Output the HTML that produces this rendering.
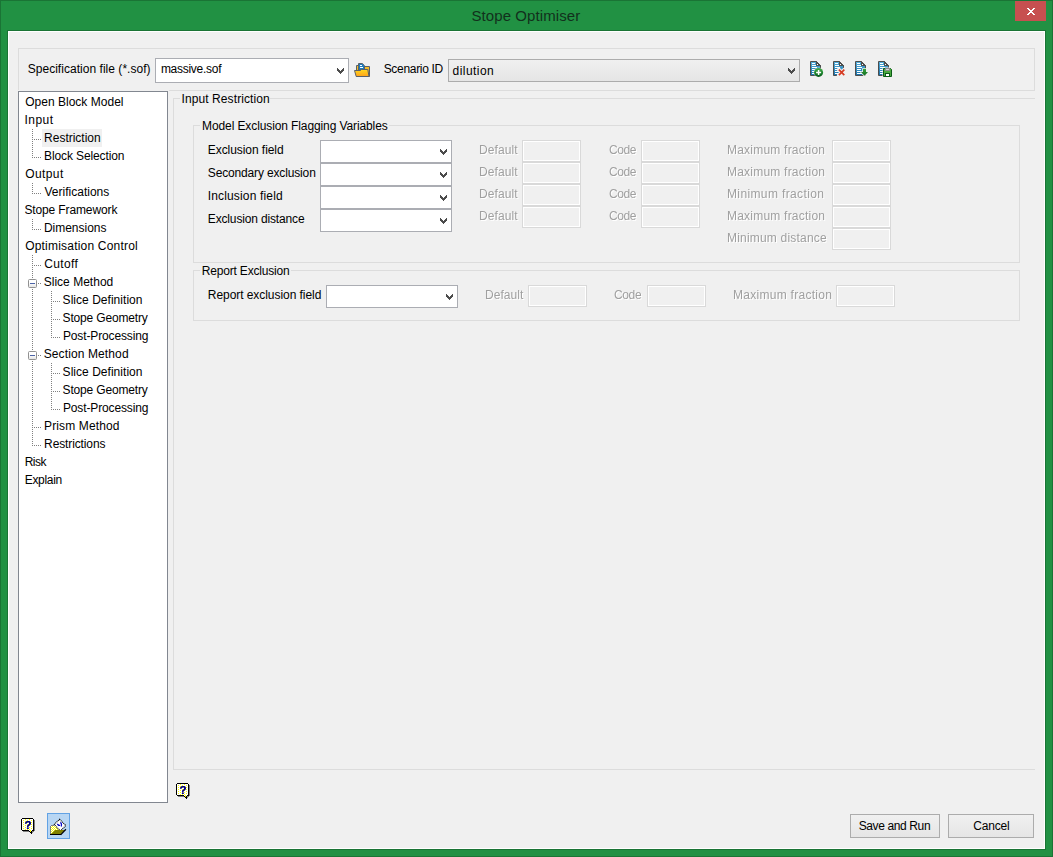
<!DOCTYPE html>
<html><head><meta charset="utf-8"><title>Stope Optimiser</title>
<style>
html,body{margin:0;padding:0}
body{width:1053px;height:857px;overflow:hidden;background:#219143;font-family:"Liberation Sans",sans-serif;font-size:12px;color:#000;position:relative}
.a{position:absolute;white-space:nowrap;line-height:14px}
.t{position:absolute;white-space:nowrap;line-height:14px;height:14px}
.dis{color:#a0a0a0;text-shadow:1px 1px 0 #fff;will-change:transform}
#frame{position:absolute;left:0;top:0;width:1051px;height:855px;border:1px solid #1a7435}
#client{position:absolute;left:7px;top:30px;width:1037px;height:818px;border:1px solid #1a7435;background:#fff}
#clientin{position:absolute;left:9px;top:32px;width:1035px;height:816px;background:#f0f0f0}
.grp{position:absolute;border:1px solid #dcdcdc;box-sizing:border-box}
.gl{position:absolute;background:#f0f0f0;padding:0;line-height:14px;height:14px;white-space:nowrap}
.combo{position:absolute;box-sizing:border-box;border:1px solid #abadb3;background:#fff}
.ddl{position:absolute;box-sizing:border-box;border:1px solid #acacac;background:linear-gradient(#f0f0f0,#e5e5e5)}
.btn{position:absolute;box-sizing:border-box;border:1px solid #acacac;background:linear-gradient(#f0f0f0,#e5e5e5);text-align:center}
.tf{position:absolute;box-sizing:border-box;border:1px solid #d9d9d9;box-shadow:inset 0 0 0 1px #fff;background:#f0f0f0}
.chev{position:absolute;width:7px;height:6px}
svg{position:absolute;overflow:visible}
</style></head>
<body>
<div id="frame"></div>
<div id="client"></div><div id="clientin"></div>
<div class="t " style="left:471.45px;top:7px;letter-spacing:0.087px;font-size:15px;line-height:18px;height:18px;color:#12301c;">Stope Optimiser</div>
<div class="a" style="left:1015px;top:1px;width:31px;height:20px;background:#c75050"></div>
<svg style="left:1027px;top:8px" width="8" height="7" viewBox="0 0 8 7" shape-rendering="crispEdges"><g fill="#fff"><rect x="0" y="0" width="2" height="1"/><rect x="6" y="0" width="2" height="1"/><rect x="1" y="1" width="2" height="1"/><rect x="5" y="1" width="2" height="1"/><rect x="2" y="2" width="4" height="1"/><rect x="3" y="3" width="2" height="1"/><rect x="2" y="4" width="4" height="1"/><rect x="1" y="5" width="2" height="1"/><rect x="5" y="5" width="2" height="1"/><rect x="0" y="6" width="2" height="1"/><rect x="6" y="6" width="2" height="1"/></g></svg>
<div class="grp" style="left:18px;top:48px;width:1017px;height:43px"></div>
<div class="t " style="left:27.70px;top:62px;letter-spacing:0.033px;">Specification file (*.sof)</div>
<div class="combo" style="left:155px;top:58px;width:194px;height:25px"></div>
<svg class="chev" style="left:337px;top:68px" width="7" height="6" viewBox="0 0 7 6" shape-rendering="crispEdges"><g fill="#4c4c4c"><rect x="0" y="0" width="1" height="1"/><rect x="6" y="0" width="1" height="1"/><rect x="0" y="1" width="2" height="1"/><rect x="5" y="1" width="2" height="1"/><rect x="0" y="2" width="3" height="1"/><rect x="4" y="2" width="3" height="1"/><rect x="1" y="3" width="5" height="1"/><rect x="2" y="4" width="3" height="1"/><rect x="3" y="5" width="1" height="1"/></g></svg>
<div class="t " style="left:160.90px;top:62px;letter-spacing:-0.273px;">massive.sof</div>
<div class="t " style="left:383.70px;top:62px;letter-spacing:-0.317px;">Scenario ID</div>
<div class="ddl" style="left:448px;top:59px;width:352px;height:23px"></div>
<svg class="chev" style="left:788px;top:68px" width="7" height="6" viewBox="0 0 7 6" shape-rendering="crispEdges"><g fill="#4c4c4c"><rect x="0" y="0" width="1" height="1"/><rect x="6" y="0" width="1" height="1"/><rect x="0" y="1" width="2" height="1"/><rect x="5" y="1" width="2" height="1"/><rect x="0" y="2" width="3" height="1"/><rect x="4" y="2" width="3" height="1"/><rect x="1" y="3" width="5" height="1"/><rect x="2" y="4" width="3" height="1"/><rect x="3" y="5" width="1" height="1"/></g></svg>
<div class="t " style="left:452.61px;top:64px;letter-spacing:0.437px;">dilution</div>
<div class="a" style="left:17px;top:90px;width:152px;height:714px;background:#f0f0f0"></div>
<div class="a" style="left:18px;top:91px;width:150px;height:712px;box-sizing:border-box;border:1px solid #828790;background:#fff"></div>
<div class="a" style="left:42px;top:129px;width:60px;height:18px;background:#f0f0f0"></div>
<div class="t " style="left:25.17px;top:95px;letter-spacing:0.020px;">Open Block Model</div>
<div class="t " style="left:24.60px;top:113px;letter-spacing:0.433px;">Input</div>
<div class="t " style="left:44.10px;top:131px;letter-spacing:-0.012px;">Restriction</div>
<div class="t " style="left:44.10px;top:149px;letter-spacing:-0.124px;">Block Selection</div>
<div class="t " style="left:25.17px;top:167px;letter-spacing:0.406px;">Output</div>
<div class="t " style="left:44.51px;top:185px;letter-spacing:0.006px;">Verifications</div>
<div class="t " style="left:24.40px;top:203px;letter-spacing:-0.121px;">Stope Framework</div>
<div class="t " style="left:43.90px;top:221px;letter-spacing:-0.014px;">Dimensions</div>
<div class="t " style="left:25.17px;top:239px;letter-spacing:0.206px;">Optimisation Control</div>
<div class="t " style="left:44.31px;top:257px;letter-spacing:0.358px;">Cutoff</div>
<div class="t " style="left:43.70px;top:275px;letter-spacing:0.018px;">Slice Method</div>
<div class="t " style="left:62.60px;top:293px;letter-spacing:0.033px;">Slice Definition</div>
<div class="t " style="left:62.60px;top:311px;letter-spacing:-0.169px;">Stope Geometry</div>
<div class="t " style="left:62.90px;top:329px;letter-spacing:-0.129px;">Post-Processing</div>
<div class="t " style="left:43.70px;top:347px;letter-spacing:0.115px;">Section Method</div>
<div class="t " style="left:62.60px;top:365px;letter-spacing:0.033px;">Slice Definition</div>
<div class="t " style="left:62.60px;top:383px;letter-spacing:-0.169px;">Stope Geometry</div>
<div class="t " style="left:62.90px;top:401px;letter-spacing:-0.129px;">Post-Processing</div>
<div class="t " style="left:44.10px;top:419px;letter-spacing:0.118px;">Prism Method</div>
<div class="t " style="left:44.10px;top:437px;letter-spacing:-0.120px;">Restrictions</div>
<div class="t " style="left:24.70px;top:455px;letter-spacing:-0.520px;">Risk</div>
<div class="t " style="left:24.70px;top:473px;letter-spacing:-0.301px;">Explain</div>
<svg style="left:0;top:0" width="170" height="500" shape-rendering="crispEdges"><g stroke="#808080" stroke-width="1" stroke-dasharray="1 1" fill="none"><line x1="32.5" y1="129" x2="32.5" y2="158"/><line x1="32.5" y1="183" x2="32.5" y2="194"/><line x1="32.5" y1="219" x2="32.5" y2="230"/><line x1="32.5" y1="255" x2="32.5" y2="446"/><line x1="32" y1="139.5" x2="41" y2="139.5"/><line x1="32" y1="157.5" x2="41" y2="157.5"/><line x1="32" y1="193.5" x2="41" y2="193.5"/><line x1="32" y1="229.5" x2="41" y2="229.5"/><line x1="32" y1="265.5" x2="41" y2="265.5"/><line x1="32" y1="427.5" x2="41" y2="427.5"/><line x1="32" y1="445.5" x2="41" y2="445.5"/><line x1="38" y1="283.5" x2="41" y2="283.5"/><line x1="38" y1="355.5" x2="41" y2="355.5"/><line x1="51.5" y1="291" x2="51.5" y2="338"/><line x1="51" y1="301.5" x2="60" y2="301.5"/><line x1="51" y1="319.5" x2="60" y2="319.5"/><line x1="51" y1="337.5" x2="60" y2="337.5"/><line x1="51.5" y1="363" x2="51.5" y2="410"/><line x1="51" y1="373.5" x2="60" y2="373.5"/><line x1="51" y1="391.5" x2="60" y2="391.5"/><line x1="51" y1="409.5" x2="60" y2="409.5"/></g></svg>
<div class="a" style="left:28px;top:279px;width:9px;height:9px;box-sizing:border-box;border:1px solid #919191;border-radius:1.5px;background:linear-gradient(#fff 40%,#e4e4e4)"></div>
<div class="a" style="left:30px;top:283px;width:5px;height:1px;background:#4b63a7"></div>
<div class="a" style="left:28px;top:351px;width:9px;height:9px;box-sizing:border-box;border:1px solid #919191;border-radius:1.5px;background:linear-gradient(#fff 40%,#e4e4e4)"></div>
<div class="a" style="left:30px;top:355px;width:5px;height:1px;background:#4b63a7"></div>
<div class="grp" style="left:173px;top:98px;width:862px;height:672px;border-right:none"></div>
<div class="gl" style="left:180px;top:92px;width:90px"></div>
<div class="t " style="left:181.50px;top:92px;letter-spacing:0.093px;">Input Restriction</div>
<div class="grp" style="left:193px;top:125px;width:827px;height:138px"></div>
<div class="gl" style="left:200px;top:119px;width:189px"></div>
<div class="t " style="left:202.10px;top:119px;letter-spacing:-0.108px;">Model Exclusion Flagging Variables</div>
<div class="grp" style="left:193px;top:270px;width:827px;height:51px"></div>
<div class="gl" style="left:200px;top:264px;width:91px"></div>
<div class="t " style="left:201.70px;top:264px;letter-spacing:-0.175px;">Report Exclusion</div>
<div class="t " style="left:207.80px;top:143px;letter-spacing:-0.063px;">Exclusion field</div>
<div class="combo" style="left:320px;top:140px;width:132px;height:23px"></div>
<svg class="chev" style="left:440px;top:149px" width="7" height="6" viewBox="0 0 7 6" shape-rendering="crispEdges"><g fill="#4c4c4c"><rect x="0" y="0" width="1" height="1"/><rect x="6" y="0" width="1" height="1"/><rect x="0" y="1" width="2" height="1"/><rect x="5" y="1" width="2" height="1"/><rect x="0" y="2" width="3" height="1"/><rect x="4" y="2" width="3" height="1"/><rect x="1" y="3" width="5" height="1"/><rect x="2" y="4" width="3" height="1"/><rect x="3" y="5" width="1" height="1"/></g></svg>
<div class="t dis" style="left:478.90px;top:143px;letter-spacing:0.100px;">Default</div>
<div class="tf" style="left:522px;top:140px;width:59px;height:22px"></div>
<div class="t dis" style="left:608.51px;top:143px;letter-spacing:-0.402px;">Code</div>
<div class="tf" style="left:641px;top:140px;width:59px;height:22px"></div>
<div class="t " style="left:207.80px;top:166px;letter-spacing:-0.151px;">Secondary exclusion</div>
<div class="combo" style="left:320px;top:163px;width:132px;height:23px"></div>
<svg class="chev" style="left:440px;top:172px" width="7" height="6" viewBox="0 0 7 6" shape-rendering="crispEdges"><g fill="#4c4c4c"><rect x="0" y="0" width="1" height="1"/><rect x="6" y="0" width="1" height="1"/><rect x="0" y="1" width="2" height="1"/><rect x="5" y="1" width="2" height="1"/><rect x="0" y="2" width="3" height="1"/><rect x="4" y="2" width="3" height="1"/><rect x="1" y="3" width="5" height="1"/><rect x="2" y="4" width="3" height="1"/><rect x="3" y="5" width="1" height="1"/></g></svg>
<div class="t dis" style="left:478.90px;top:165px;letter-spacing:0.100px;">Default</div>
<div class="tf" style="left:522px;top:162px;width:59px;height:22px"></div>
<div class="t dis" style="left:608.51px;top:165px;letter-spacing:-0.402px;">Code</div>
<div class="tf" style="left:641px;top:162px;width:59px;height:22px"></div>
<div class="t " style="left:207.70px;top:189px;letter-spacing:0.165px;">Inclusion field</div>
<div class="combo" style="left:320px;top:186px;width:132px;height:23px"></div>
<svg class="chev" style="left:440px;top:195px" width="7" height="6" viewBox="0 0 7 6" shape-rendering="crispEdges"><g fill="#4c4c4c"><rect x="0" y="0" width="1" height="1"/><rect x="6" y="0" width="1" height="1"/><rect x="0" y="1" width="2" height="1"/><rect x="5" y="1" width="2" height="1"/><rect x="0" y="2" width="3" height="1"/><rect x="4" y="2" width="3" height="1"/><rect x="1" y="3" width="5" height="1"/><rect x="2" y="4" width="3" height="1"/><rect x="3" y="5" width="1" height="1"/></g></svg>
<div class="t dis" style="left:478.90px;top:187px;letter-spacing:0.100px;">Default</div>
<div class="tf" style="left:522px;top:184px;width:59px;height:22px"></div>
<div class="t dis" style="left:608.51px;top:187px;letter-spacing:-0.402px;">Code</div>
<div class="tf" style="left:641px;top:184px;width:59px;height:22px"></div>
<div class="t " style="left:207.80px;top:212px;letter-spacing:-0.153px;">Exclusion distance</div>
<div class="combo" style="left:320px;top:209px;width:132px;height:23px"></div>
<svg class="chev" style="left:440px;top:218px" width="7" height="6" viewBox="0 0 7 6" shape-rendering="crispEdges"><g fill="#4c4c4c"><rect x="0" y="0" width="1" height="1"/><rect x="6" y="0" width="1" height="1"/><rect x="0" y="1" width="2" height="1"/><rect x="5" y="1" width="2" height="1"/><rect x="0" y="2" width="3" height="1"/><rect x="4" y="2" width="3" height="1"/><rect x="1" y="3" width="5" height="1"/><rect x="2" y="4" width="3" height="1"/><rect x="3" y="5" width="1" height="1"/></g></svg>
<div class="t dis" style="left:478.90px;top:209px;letter-spacing:0.100px;">Default</div>
<div class="tf" style="left:522px;top:206px;width:59px;height:22px"></div>
<div class="t dis" style="left:608.51px;top:209px;letter-spacing:-0.402px;">Code</div>
<div class="tf" style="left:641px;top:206px;width:59px;height:22px"></div>
<div class="t dis" style="left:727.00px;top:143px;letter-spacing:0.219px;">Maximum fraction</div>
<div class="tf" style="left:832px;top:140px;width:59px;height:22px"></div>
<div class="t dis" style="left:727.00px;top:165px;letter-spacing:0.219px;">Maximum fraction</div>
<div class="tf" style="left:832px;top:162px;width:59px;height:22px"></div>
<div class="t dis" style="left:727.00px;top:187px;letter-spacing:0.373px;">Minimum fraction</div>
<div class="tf" style="left:832px;top:184px;width:59px;height:22px"></div>
<div class="t dis" style="left:727.00px;top:209px;letter-spacing:0.219px;">Maximum fraction</div>
<div class="tf" style="left:832px;top:206px;width:59px;height:22px"></div>
<div class="t dis" style="left:727.00px;top:231px;letter-spacing:0.200px;">Minimum distance</div>
<div class="tf" style="left:832px;top:228px;width:59px;height:22px"></div>
<div class="t " style="left:207.80px;top:288px;letter-spacing:-0.057px;">Report exclusion field</div>
<div class="combo" style="left:326px;top:285px;width:132px;height:23px"></div>
<svg class="chev" style="left:446px;top:294px" width="7" height="6" viewBox="0 0 7 6" shape-rendering="crispEdges"><g fill="#4c4c4c"><rect x="0" y="0" width="1" height="1"/><rect x="6" y="0" width="1" height="1"/><rect x="0" y="1" width="2" height="1"/><rect x="5" y="1" width="2" height="1"/><rect x="0" y="2" width="3" height="1"/><rect x="4" y="2" width="3" height="1"/><rect x="1" y="3" width="5" height="1"/><rect x="2" y="4" width="3" height="1"/><rect x="3" y="5" width="1" height="1"/></g></svg>
<div class="t dis" style="left:485.00px;top:288px;letter-spacing:0.050px;">Default</div>
<div class="tf" style="left:528px;top:285px;width:59px;height:22px"></div>
<div class="t dis" style="left:614.41px;top:288px;letter-spacing:-0.369px;">Code</div>
<div class="tf" style="left:647px;top:285px;width:59px;height:22px"></div>
<div class="t dis" style="left:732.50px;top:288px;letter-spacing:0.279px;">Maximum fraction</div>
<div class="tf" style="left:836px;top:285px;width:59px;height:22px"></div>
<div class="btn" style="left:850px;top:814px;width:90px;height:24px"></div>
<div class="t " style="left:858.70px;top:819px;letter-spacing:-0.379px;">Save and Run</div>
<div class="btn" style="left:948px;top:814px;width:86px;height:24px"></div>
<div class="t " style="left:973.31px;top:819px;letter-spacing:-0.217px;">Cancel</div>
<div class="a" style="left:47px;top:813px;width:23px;height:26px;box-sizing:border-box;border:1px solid #62a2e4;background:#b8d6f3"></div>
<svg style="left:21px;top:818px" width="14" height="16" viewBox="0 0 14 16" shape-rendering="crispEdges"><rect x="1" y="0" width="11" height="1" fill="#000"/><rect x="0" y="1" width="1" height="1" fill="#000"/><rect x="1" y="1" width="3" height="1" fill="#fff"/><rect x="4" y="1" width="1" height="1" fill="#ffff00"/><rect x="5" y="1" width="3" height="1" fill="#fff"/><rect x="8" y="1" width="1" height="1" fill="#ffff00"/><rect x="9" y="1" width="3" height="1" fill="#fff"/><rect x="12" y="1" width="1" height="1" fill="#000"/><rect x="0" y="2" width="1" height="1" fill="#000"/><rect x="1" y="2" width="1" height="1" fill="#fff"/><rect x="2" y="2" width="1" height="1" fill="#ffff00"/><rect x="3" y="2" width="3" height="1" fill="#fff"/><rect x="6" y="2" width="1" height="1" fill="#ffff00"/><rect x="7" y="2" width="3" height="1" fill="#fff"/><rect x="10" y="2" width="1" height="1" fill="#ffff00"/><rect x="11" y="2" width="1" height="1" fill="#fff"/><rect x="12" y="2" width="1" height="1" fill="#000"/><rect x="13" y="2" width="1" height="1" fill="#808080"/><rect x="0" y="3" width="1" height="1" fill="#000"/><rect x="1" y="3" width="3" height="1" fill="#fff"/><rect x="4" y="3" width="1" height="1" fill="#ffff00"/><rect x="5" y="3" width="3" height="1" fill="#fff"/><rect x="8" y="3" width="1" height="1" fill="#ffff00"/><rect x="9" y="3" width="3" height="1" fill="#fff"/><rect x="12" y="3" width="1" height="1" fill="#000"/><rect x="13" y="3" width="1" height="1" fill="#808080"/><rect x="0" y="4" width="1" height="1" fill="#000"/><rect x="1" y="4" width="1" height="1" fill="#fff"/><rect x="2" y="4" width="1" height="1" fill="#ffff00"/><rect x="3" y="4" width="3" height="1" fill="#fff"/><rect x="6" y="4" width="1" height="1" fill="#ffff00"/><rect x="7" y="4" width="3" height="1" fill="#fff"/><rect x="10" y="4" width="1" height="1" fill="#ffff00"/><rect x="11" y="4" width="1" height="1" fill="#fff"/><rect x="12" y="4" width="1" height="1" fill="#000"/><rect x="13" y="4" width="1" height="1" fill="#808080"/><rect x="0" y="5" width="1" height="1" fill="#000"/><rect x="1" y="5" width="3" height="1" fill="#fff"/><rect x="4" y="5" width="1" height="1" fill="#ffff00"/><rect x="5" y="5" width="3" height="1" fill="#fff"/><rect x="8" y="5" width="1" height="1" fill="#ffff00"/><rect x="9" y="5" width="3" height="1" fill="#fff"/><rect x="12" y="5" width="1" height="1" fill="#000"/><rect x="13" y="5" width="1" height="1" fill="#808080"/><rect x="0" y="6" width="1" height="1" fill="#000"/><rect x="1" y="6" width="1" height="1" fill="#fff"/><rect x="2" y="6" width="1" height="1" fill="#ffff00"/><rect x="3" y="6" width="3" height="1" fill="#fff"/><rect x="6" y="6" width="1" height="1" fill="#ffff00"/><rect x="7" y="6" width="3" height="1" fill="#fff"/><rect x="10" y="6" width="1" height="1" fill="#ffff00"/><rect x="11" y="6" width="1" height="1" fill="#fff"/><rect x="12" y="6" width="1" height="1" fill="#000"/><rect x="13" y="6" width="1" height="1" fill="#808080"/><rect x="0" y="7" width="1" height="1" fill="#000"/><rect x="1" y="7" width="3" height="1" fill="#fff"/><rect x="4" y="7" width="1" height="1" fill="#ffff00"/><rect x="5" y="7" width="3" height="1" fill="#fff"/><rect x="8" y="7" width="1" height="1" fill="#ffff00"/><rect x="9" y="7" width="3" height="1" fill="#fff"/><rect x="12" y="7" width="1" height="1" fill="#000"/><rect x="13" y="7" width="1" height="1" fill="#808080"/><rect x="0" y="8" width="1" height="1" fill="#000"/><rect x="1" y="8" width="1" height="1" fill="#fff"/><rect x="2" y="8" width="1" height="1" fill="#ffff00"/><rect x="3" y="8" width="3" height="1" fill="#fff"/><rect x="6" y="8" width="1" height="1" fill="#ffff00"/><rect x="7" y="8" width="3" height="1" fill="#fff"/><rect x="10" y="8" width="1" height="1" fill="#ffff00"/><rect x="11" y="8" width="1" height="1" fill="#fff"/><rect x="12" y="8" width="1" height="1" fill="#000"/><rect x="13" y="8" width="1" height="1" fill="#808080"/><rect x="0" y="9" width="1" height="1" fill="#000"/><rect x="1" y="9" width="3" height="1" fill="#fff"/><rect x="4" y="9" width="1" height="1" fill="#ffff00"/><rect x="5" y="9" width="3" height="1" fill="#fff"/><rect x="8" y="9" width="1" height="1" fill="#ffff00"/><rect x="9" y="9" width="3" height="1" fill="#fff"/><rect x="12" y="9" width="1" height="1" fill="#000"/><rect x="13" y="9" width="1" height="1" fill="#808080"/><rect x="0" y="10" width="1" height="1" fill="#000"/><rect x="1" y="10" width="1" height="1" fill="#fff"/><rect x="2" y="10" width="1" height="1" fill="#ffff00"/><rect x="3" y="10" width="3" height="1" fill="#fff"/><rect x="6" y="10" width="1" height="1" fill="#ffff00"/><rect x="7" y="10" width="3" height="1" fill="#fff"/><rect x="10" y="10" width="1" height="1" fill="#ffff00"/><rect x="11" y="10" width="1" height="1" fill="#fff"/><rect x="12" y="10" width="1" height="1" fill="#000"/><rect x="13" y="10" width="1" height="1" fill="#808080"/><rect x="0" y="11" width="1" height="1" fill="#000"/><rect x="1" y="11" width="3" height="1" fill="#fff"/><rect x="4" y="11" width="1" height="1" fill="#ffff00"/><rect x="5" y="11" width="1" height="1" fill="#fff"/><rect x="6" y="11" width="1" height="1" fill="#ffff00"/><rect x="7" y="11" width="1" height="1" fill="#fff"/><rect x="8" y="11" width="1" height="1" fill="#ffff00"/><rect x="9" y="11" width="3" height="1" fill="#fff"/><rect x="12" y="11" width="1" height="1" fill="#000"/><rect x="13" y="11" width="1" height="1" fill="#808080"/><rect x="1" y="12" width="7" height="1" fill="#000"/><rect x="8" y="12" width="1" height="1" fill="#fff"/><rect x="9" y="12" width="1" height="1" fill="#ffff00"/><rect x="10" y="12" width="1" height="1" fill="#fff"/><rect x="11" y="12" width="2" height="1" fill="#000"/><rect x="13" y="12" width="1" height="1" fill="#808080"/><rect x="2" y="13" width="6" height="1" fill="#808080"/><rect x="8" y="13" width="1" height="1" fill="#000"/><rect x="9" y="13" width="1" height="1" fill="#ffff00"/><rect x="10" y="13" width="1" height="1" fill="#000"/><rect x="11" y="13" width="2" height="1" fill="#808080"/><rect x="9" y="14" width="2" height="1" fill="#000"/><rect x="11" y="14" width="1" height="1" fill="#808080"/><rect x="10" y="15" width="1" height="1" fill="#000"/></svg><div class="a" style="left:24px;top:819px;width:8px;height:12px;line-height:12px;font-size:11.5px;font-weight:bold;color:#000080;text-align:center;will-change:transform;text-shadow:0 0 0 #000080">?</div>
<svg style="left:176px;top:783px" width="14" height="16" viewBox="0 0 14 16" shape-rendering="crispEdges"><rect x="1" y="0" width="11" height="1" fill="#000"/><rect x="0" y="1" width="1" height="1" fill="#000"/><rect x="1" y="1" width="3" height="1" fill="#fff"/><rect x="4" y="1" width="1" height="1" fill="#ffff00"/><rect x="5" y="1" width="3" height="1" fill="#fff"/><rect x="8" y="1" width="1" height="1" fill="#ffff00"/><rect x="9" y="1" width="3" height="1" fill="#fff"/><rect x="12" y="1" width="1" height="1" fill="#000"/><rect x="0" y="2" width="1" height="1" fill="#000"/><rect x="1" y="2" width="1" height="1" fill="#fff"/><rect x="2" y="2" width="1" height="1" fill="#ffff00"/><rect x="3" y="2" width="3" height="1" fill="#fff"/><rect x="6" y="2" width="1" height="1" fill="#ffff00"/><rect x="7" y="2" width="3" height="1" fill="#fff"/><rect x="10" y="2" width="1" height="1" fill="#ffff00"/><rect x="11" y="2" width="1" height="1" fill="#fff"/><rect x="12" y="2" width="1" height="1" fill="#000"/><rect x="13" y="2" width="1" height="1" fill="#808080"/><rect x="0" y="3" width="1" height="1" fill="#000"/><rect x="1" y="3" width="3" height="1" fill="#fff"/><rect x="4" y="3" width="1" height="1" fill="#ffff00"/><rect x="5" y="3" width="3" height="1" fill="#fff"/><rect x="8" y="3" width="1" height="1" fill="#ffff00"/><rect x="9" y="3" width="3" height="1" fill="#fff"/><rect x="12" y="3" width="1" height="1" fill="#000"/><rect x="13" y="3" width="1" height="1" fill="#808080"/><rect x="0" y="4" width="1" height="1" fill="#000"/><rect x="1" y="4" width="1" height="1" fill="#fff"/><rect x="2" y="4" width="1" height="1" fill="#ffff00"/><rect x="3" y="4" width="3" height="1" fill="#fff"/><rect x="6" y="4" width="1" height="1" fill="#ffff00"/><rect x="7" y="4" width="3" height="1" fill="#fff"/><rect x="10" y="4" width="1" height="1" fill="#ffff00"/><rect x="11" y="4" width="1" height="1" fill="#fff"/><rect x="12" y="4" width="1" height="1" fill="#000"/><rect x="13" y="4" width="1" height="1" fill="#808080"/><rect x="0" y="5" width="1" height="1" fill="#000"/><rect x="1" y="5" width="3" height="1" fill="#fff"/><rect x="4" y="5" width="1" height="1" fill="#ffff00"/><rect x="5" y="5" width="3" height="1" fill="#fff"/><rect x="8" y="5" width="1" height="1" fill="#ffff00"/><rect x="9" y="5" width="3" height="1" fill="#fff"/><rect x="12" y="5" width="1" height="1" fill="#000"/><rect x="13" y="5" width="1" height="1" fill="#808080"/><rect x="0" y="6" width="1" height="1" fill="#000"/><rect x="1" y="6" width="1" height="1" fill="#fff"/><rect x="2" y="6" width="1" height="1" fill="#ffff00"/><rect x="3" y="6" width="3" height="1" fill="#fff"/><rect x="6" y="6" width="1" height="1" fill="#ffff00"/><rect x="7" y="6" width="3" height="1" fill="#fff"/><rect x="10" y="6" width="1" height="1" fill="#ffff00"/><rect x="11" y="6" width="1" height="1" fill="#fff"/><rect x="12" y="6" width="1" height="1" fill="#000"/><rect x="13" y="6" width="1" height="1" fill="#808080"/><rect x="0" y="7" width="1" height="1" fill="#000"/><rect x="1" y="7" width="3" height="1" fill="#fff"/><rect x="4" y="7" width="1" height="1" fill="#ffff00"/><rect x="5" y="7" width="3" height="1" fill="#fff"/><rect x="8" y="7" width="1" height="1" fill="#ffff00"/><rect x="9" y="7" width="3" height="1" fill="#fff"/><rect x="12" y="7" width="1" height="1" fill="#000"/><rect x="13" y="7" width="1" height="1" fill="#808080"/><rect x="0" y="8" width="1" height="1" fill="#000"/><rect x="1" y="8" width="1" height="1" fill="#fff"/><rect x="2" y="8" width="1" height="1" fill="#ffff00"/><rect x="3" y="8" width="3" height="1" fill="#fff"/><rect x="6" y="8" width="1" height="1" fill="#ffff00"/><rect x="7" y="8" width="3" height="1" fill="#fff"/><rect x="10" y="8" width="1" height="1" fill="#ffff00"/><rect x="11" y="8" width="1" height="1" fill="#fff"/><rect x="12" y="8" width="1" height="1" fill="#000"/><rect x="13" y="8" width="1" height="1" fill="#808080"/><rect x="0" y="9" width="1" height="1" fill="#000"/><rect x="1" y="9" width="3" height="1" fill="#fff"/><rect x="4" y="9" width="1" height="1" fill="#ffff00"/><rect x="5" y="9" width="3" height="1" fill="#fff"/><rect x="8" y="9" width="1" height="1" fill="#ffff00"/><rect x="9" y="9" width="3" height="1" fill="#fff"/><rect x="12" y="9" width="1" height="1" fill="#000"/><rect x="13" y="9" width="1" height="1" fill="#808080"/><rect x="0" y="10" width="1" height="1" fill="#000"/><rect x="1" y="10" width="1" height="1" fill="#fff"/><rect x="2" y="10" width="1" height="1" fill="#ffff00"/><rect x="3" y="10" width="3" height="1" fill="#fff"/><rect x="6" y="10" width="1" height="1" fill="#ffff00"/><rect x="7" y="10" width="3" height="1" fill="#fff"/><rect x="10" y="10" width="1" height="1" fill="#ffff00"/><rect x="11" y="10" width="1" height="1" fill="#fff"/><rect x="12" y="10" width="1" height="1" fill="#000"/><rect x="13" y="10" width="1" height="1" fill="#808080"/><rect x="0" y="11" width="1" height="1" fill="#000"/><rect x="1" y="11" width="3" height="1" fill="#fff"/><rect x="4" y="11" width="1" height="1" fill="#ffff00"/><rect x="5" y="11" width="1" height="1" fill="#fff"/><rect x="6" y="11" width="1" height="1" fill="#ffff00"/><rect x="7" y="11" width="1" height="1" fill="#fff"/><rect x="8" y="11" width="1" height="1" fill="#ffff00"/><rect x="9" y="11" width="3" height="1" fill="#fff"/><rect x="12" y="11" width="1" height="1" fill="#000"/><rect x="13" y="11" width="1" height="1" fill="#808080"/><rect x="1" y="12" width="7" height="1" fill="#000"/><rect x="8" y="12" width="1" height="1" fill="#fff"/><rect x="9" y="12" width="1" height="1" fill="#ffff00"/><rect x="10" y="12" width="1" height="1" fill="#fff"/><rect x="11" y="12" width="2" height="1" fill="#000"/><rect x="13" y="12" width="1" height="1" fill="#808080"/><rect x="2" y="13" width="6" height="1" fill="#808080"/><rect x="8" y="13" width="1" height="1" fill="#000"/><rect x="9" y="13" width="1" height="1" fill="#ffff00"/><rect x="10" y="13" width="1" height="1" fill="#000"/><rect x="11" y="13" width="2" height="1" fill="#808080"/><rect x="9" y="14" width="2" height="1" fill="#000"/><rect x="11" y="14" width="1" height="1" fill="#808080"/><rect x="10" y="15" width="1" height="1" fill="#000"/></svg><div class="a" style="left:179px;top:784px;width:8px;height:12px;line-height:12px;font-size:11.5px;font-weight:bold;color:#000080;text-align:center;will-change:transform;text-shadow:0 0 0 #000080">?</div>
<svg style="left:50px;top:819px" width="17" height="17" viewBox="0 0 17 17" shape-rendering="crispEdges"><defs><pattern id="dz" width="2" height="2" patternUnits="userSpaceOnUse"><rect width="2" height="2" fill="#ffff00"/><rect x="0" y="0" width="1" height="1" fill="#fff"/><rect x="1" y="1" width="1" height="1" fill="#fff"/></pattern></defs><path d="M1 7 H10 V11 H5 L1 15 Z" fill="url(#dz)"/><rect x="0" y="7" width="1" height="8" fill="#808080"/><rect x="1" y="6" width="3" height="1" fill="#808080"/><path d="M9.5 0.3 L15.8 6.4 L10.5 12 L4.3 5.5 Z" fill="#fff" shape-rendering="auto"/><path d="M9.5 0.3 L15.8 6.4 L10.5 12 L4.3 5.5 Z" fill="none" stroke="#000" stroke-width="1.1" stroke-dasharray="1 0.8" shape-rendering="auto"/><path d="M7.3 5.1 L8.6 6.3 L10 6.3 M10.5 3.2 Q12.2 5 11.2 7.6" stroke="#0000c8" stroke-width="1.3" fill="none" shape-rendering="auto"/><path d="M5.15 11 H14.6 L10.75 15 H1 Z" fill="#808000" shape-rendering="auto"/><rect x="0" y="15" width="11" height="1" fill="#000"/><path d="M10.6 15.9 L15.9 10.2" stroke="#000" stroke-width="1.3" shape-rendering="auto"/></svg>
<svg style="left:354px;top:63px" width="16" height="14" viewBox="0 0 16 14"><defs><linearGradient id="fg" x1="0" y1="0" x2="0" y2="1"><stop offset="0" stop-color="#ffd91f"/><stop offset="1" stop-color="#ffa21a"/></linearGradient><linearGradient id="fb" x1="0" y1="0" x2="0" y2="1"><stop offset="0" stop-color="#f7c32a"/><stop offset="1" stop-color="#e0a020"/></linearGradient></defs><path d="M2.5 13.5 V2.5 H4.5 V3.5 H15.5 V13.5 Z" fill="url(#fb)" stroke="#5a6068" stroke-width="1"/><path d="M4.5 7 V0.5 H8.3 L10.5 2.7 V7 Z" fill="#1c7cc0" stroke="#5a6068" stroke-width="1"/><rect x="6" y="2" width="2" height="1" fill="#fff"/><rect x="6" y="4" width="3" height="1" fill="#fff"/><path d="M0.5 7.5 H6.5 L7.5 6.5 H13.8 L15 13.5 H2.2 Z" fill="url(#fg)" stroke="#5a6068" stroke-width="1" stroke-linejoin="round"/></svg>
<svg style="left:810px;top:61px" width="16" height="17" viewBox="0 0 16 17"><defs><linearGradient id="dga" x1="0" y1="0" x2="0" y2="1"><stop offset="0" stop-color="#56afdc"/><stop offset="1" stop-color="#1872ab"/></linearGradient></defs><path d="M0.5 0.5 H6.5 L10.5 4.5 V14.5 H0.5 Z" fill="url(#dga)" stroke="#4d4d4d" stroke-width="1"/><path d="M6.5 0.5 V4.5 H10.5 Z" fill="#4d4d4d" stroke="#4d4d4d" stroke-width="1" stroke-linejoin="round"/><rect x="7" y="3" width="1" height="1" fill="#fff"/><g fill="#fff" shape-rendering="crispEdges"><rect x="2" y="2" width="3" height="1"/><rect x="2" y="4" width="4" height="1"/><rect x="2" y="6" width="5" height="1"/><rect x="2" y="8" width="4" height="1"/><rect x="2" y="10" width="4" height="1"/><rect x="2" y="12" width="5" height="1"/></g><defs><linearGradient id="gc" x1="0" y1="0" x2="0" y2="1"><stop offset="0" stop-color="#4cae4f"/><stop offset="0.5" stop-color="#1f8a2f"/><stop offset="1" stop-color="#06551a"/></linearGradient></defs><circle cx="8.6" cy="11.4" r="5" fill="#f0f0f0" opacity="0.6"/><circle cx="8.6" cy="11.4" r="4.5" fill="url(#gc)"/><path d="M6.1 11.4 H11.1 M8.6 8.9 V13.9" stroke="#fff" stroke-width="1.5" fill="none"/></svg>
<svg style="left:833px;top:61px" width="16" height="17" viewBox="0 0 16 17"><defs><linearGradient id="dgb" x1="0" y1="0" x2="0" y2="1"><stop offset="0" stop-color="#56afdc"/><stop offset="1" stop-color="#1872ab"/></linearGradient></defs><path d="M0.5 0.5 H6.5 L10.5 4.5 V14.5 H0.5 Z" fill="url(#dgb)" stroke="#4d4d4d" stroke-width="1"/><path d="M6.5 0.5 V4.5 H10.5 Z" fill="#4d4d4d" stroke="#4d4d4d" stroke-width="1" stroke-linejoin="round"/><rect x="7" y="3" width="1" height="1" fill="#fff"/><g fill="#fff" shape-rendering="crispEdges"><rect x="2" y="2" width="3" height="1"/><rect x="2" y="4" width="4" height="1"/><rect x="2" y="6" width="5" height="1"/><rect x="2" y="8" width="4" height="1"/><rect x="2" y="10" width="4" height="1"/><rect x="2" y="12" width="5" height="1"/></g><path d="M5.8 8.6 L11.4 14.2 M11.4 8.6 L5.8 14.2" stroke="#f0f0f0" stroke-width="4" fill="none" stroke-linecap="round"/><path d="M8.6 11 L13 15.5 H4.5 Z M8.6 11 L13 7 V15 Z" fill="#f0f0f0"/><path d="M5.9 8.7 L11.3 14.1 M11.3 8.7 L5.9 14.1" stroke="#d63a22" stroke-width="1.7" fill="none"/></svg>
<svg style="left:855px;top:61px" width="16" height="17" viewBox="0 0 16 17"><defs><linearGradient id="dgc" x1="0" y1="0" x2="0" y2="1"><stop offset="0" stop-color="#56afdc"/><stop offset="1" stop-color="#1872ab"/></linearGradient></defs><path d="M0.5 0.5 H6.5 L10.5 4.5 V14.5 H0.5 Z" fill="url(#dgc)" stroke="#4d4d4d" stroke-width="1"/><path d="M6.5 0.5 V4.5 H10.5 Z" fill="#4d4d4d" stroke="#4d4d4d" stroke-width="1" stroke-linejoin="round"/><rect x="7" y="3" width="1" height="1" fill="#fff"/><g fill="#fff" shape-rendering="crispEdges"><rect x="2" y="2" width="3" height="1"/><rect x="2" y="4" width="4" height="1"/><rect x="2" y="6" width="5" height="1"/><rect x="2" y="8" width="4" height="1"/><rect x="2" y="10" width="4" height="1"/><rect x="2" y="12" width="5" height="1"/></g><defs><linearGradient id="ga" x1="0" y1="0" x2="0" y2="1"><stop offset="0" stop-color="#3aa53e"/><stop offset="1" stop-color="#0d6a1d"/></linearGradient></defs><path d="M8 7.8 H11 V11 H13 L9.5 14.8 L6 11 H8 Z" fill="url(#ga)" stroke="#f0f0f0" stroke-width="1.6" paint-order="stroke" stroke-linejoin="round"/></svg>
<svg style="left:878px;top:61px" width="16" height="17" viewBox="0 0 16 17"><defs><linearGradient id="dgd" x1="0" y1="0" x2="0" y2="1"><stop offset="0" stop-color="#56afdc"/><stop offset="1" stop-color="#1872ab"/></linearGradient></defs><path d="M0.5 0.5 H6.5 L10.5 4.5 V14.5 H0.5 Z" fill="url(#dgd)" stroke="#4d4d4d" stroke-width="1"/><path d="M6.5 0.5 V4.5 H10.5 Z" fill="#4d4d4d" stroke="#4d4d4d" stroke-width="1" stroke-linejoin="round"/><rect x="7" y="3" width="1" height="1" fill="#fff"/><g fill="#fff" shape-rendering="crispEdges"><rect x="2" y="2" width="3" height="1"/><rect x="2" y="4" width="4" height="1"/><rect x="2" y="6" width="5" height="1"/><rect x="2" y="8" width="4" height="1"/><rect x="2" y="10" width="4" height="1"/><rect x="2" y="12" width="5" height="1"/></g><rect x="4.3" y="6.3" width="10.4" height="10.4" fill="#f0f0f0" opacity="0.7"/><path d="M5.5 7.5 H12.5 L13.5 8.5 V15.5 H5.5 Z" fill="#4aa83f" stroke="#0b5b16" stroke-width="1"/><rect x="7" y="7" width="5" height="3" fill="#8c8c8c"/><rect x="8" y="8" width="3" height="1" fill="#d8d8d8"/><rect x="7" y="12" width="5" height="3" fill="#0b5b16"/><rect x="8" y="13" width="3" height="2" fill="#fff"/></svg>
</body></html>
